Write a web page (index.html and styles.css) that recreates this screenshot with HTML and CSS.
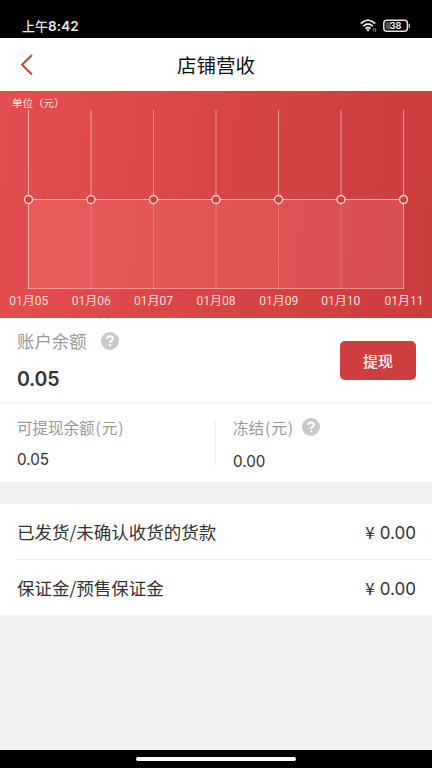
FILE: index.html
```html
<!DOCTYPE html>
<html lang="zh-CN">
<head>
<meta charset="utf-8">
<meta name="viewport" content="width=device-width, initial-scale=1">
<title>店铺营收</title>
<link rel="stylesheet" href="styles.css">
</head>
<body>
<div class="screen">
  <div class="status">
    <span class="time">上午<b>8:42</b></span>
    <svg class="status-icons" width="52" height="16" viewBox="0 0 52 16">
      <g fill="none" stroke="#e4e4e4" stroke-width="1.8">
        <path d="M.8 5.5Q8-1.2 15.2 5.500"/>
        <path d="M3.100 8.200Q8 3.700 12.900 8.200"/>
        <path d="M5.500 10.600Q8 8.300 10.500 10.600"/>
        <rect x="23.800" y="2.300" width="23.600" height="11" rx="3" stroke-width="1.500"/>
      </g>
      <path d="M6.300 11.600Q8 10.400 9.700 11.600L8 13.700Z" fill="#e4e4e4"/>
      <path d="M13.700 13.500v-3l-1 1M15.500 10.500v3l1-1" fill="none" stroke="#bbb" stroke-width=".7"/>
      <rect x="25.500" y="4" width="5.500" height="7.600" rx="1" fill="#555"/>
      <rect x="48.700" y="5.800" width="1.300" height="4" fill="#ccc"/>
      <text class="battery-text" x="35.600" y="11" text-anchor="middle">38</text>
    </svg>
  </div>
  <header class="header">
    <svg class="back" width="14" height="22" viewBox="0 0 14 22"><path d="M12 1L2 10.700L12 20.500" fill="none" stroke="#cf4141" stroke-width="2"/></svg>
    <h1>店铺营收</h1>
  </header>
  <section class="chart">
    <svg width="432" height="227" viewBox="0 91 432 227">
      <text class="unit" x="12" y="107">单位（元）</text>
      <rect x="28.500" y="199.500" width="375" height="89" fill="#ff8a88" fill-opacity=".24"/>
      <path d="M28.500 110V289M403.500 110V289" class="edge"/>
      <path d="M91 110V199M153.500 110V199M216 110V199M278.500 110V199M341 110V199" class="grid"/>
      <path d="M91 200V289M153.500 200V289M216 200V289M278.500 200V289M341 200V289" class="grid-low"/>
      <path d="M28 288.500H404" class="base"/>
      <path d="M28.500 199.500H403.500" class="line"/>
      <g class="points">
        <circle cx="28.500" cy="199.500" r="4"/><circle cx="91" cy="199.500" r="4"/><circle cx="153.500" cy="199.500" r="4"/><circle cx="216" cy="199.500" r="4"/><circle cx="278.500" cy="199.500" r="4"/><circle cx="341" cy="199.500" r="4"/><circle cx="403.500" cy="199.500" r="4"/>
      </g>
      <g class="dates">
        <text x="28.700" y="304.500">01月05</text><text x="91.200" y="304.500">01月06</text><text x="153.600" y="304.500">01月07</text><text x="216" y="304.500">01月08</text><text x="278.700" y="304.500">01月09</text><text x="340.800" y="304.500">01月10</text><text x="404" y="304.500">01月11</text>
      </g>
    </svg>
  </section>
  <section class="balance">
    <div>
      <div class="label">账户余额
        <svg class="help" width="18" height="18" viewBox="0 0 18 18"><circle cx="9" cy="9" r="9"/><path d="M6.200 7Q6.200 4.300 9 4.300T11.800 6.800C11.800 8.700 9 8.500 9 10.900"/><path d="M9 12.300v2"/></svg>
      </div>
      <div class="total">0.05</div>
    </div>
    <button class="withdraw">提现</button>
  </section>
  <section class="split">
    <div class="cell">
      <div class="sub-label">可提现余额<i>(</i>元<i>)</i></div>
      <div class="amount">0.05</div>
    </div>
    <div class="cell cell-right">
      <div class="sub-label">冻结<i>(</i>元<i>)</i>
        <svg class="help" width="18" height="18" viewBox="0 0 18 18"><circle cx="9" cy="9" r="9"/><path d="M6.200 7Q6.200 4.300 9 4.300T11.800 6.800C11.800 8.700 9 8.500 9 10.900"/><path d="M9 12.300v2"/></svg>
      </div>
      <div class="amount">0.00</div>
    </div>
  </section>
  <section class="list">
    <div class="row"><span>已发货/未确认收货的货款</span><span class="money"><span class="yen">¥</span>0.00</span></div>
    <div class="row"><span>保证金/预售保证金</span><span class="money"><span class="yen">¥</span>0.00</span></div>
  </section>
  <div class="navbar"><div class="pill"></div></div>
</div>
</body>
</html>
```
FILE: styles.css
```css
* { box-sizing: border-box; }
body { margin: 0; background: #f2f2f2; font-family: "Noto Sans CJK SC", sans-serif; color: #333; }
svg { display: block; flex: none; }
.screen { width: 432px; height: 768px; display: flex; flex-direction: column; overflow: hidden; white-space: nowrap; }
.status { height: 38px; flex: none; background: #000; color: #e8e8e8; display: flex; justify-content: space-between; padding: 14px 20px 0 22px; }
.time { font-size: 13px; font-weight: 500; line-height: 24px; }
.time b { font-family: Inter, sans-serif; font-size: 13.5px; font-weight: 600; letter-spacing: .1px; }
.status-icons { margin-top: 4px; }
.battery-text { font: 700 9px Inter, sans-serif; fill: #eee; }
.header { height: 53px; flex: none; background: #fff; display: flex; align-items: center; padding: 0 34px 0 20px; }
.header h1 { flex: 1; margin: 0; text-align: center; font-size: 19.500px; font-weight: 400; color: #111; }
.chart { height: 227px; flex: none; background: linear-gradient(95deg, #e54e4f 0%, #d94545 50%, #cb3c3c 100%); }
.unit { font-size: 10.500px; fill: #ffe4e2; }
.edge { stroke: #fff; stroke-opacity: .55; fill: none; }
.grid { stroke: #fff; stroke-opacity: .45; fill: none; }
.grid-low { stroke: #fff; stroke-opacity: .22; fill: none; }
.base { stroke: #fff; stroke-opacity: .38; }
.line { stroke: #f8c8c5; stroke-width: 1.2; }
.points { fill: #ce4040; stroke: #fbdedc; stroke-width: 1.300; }
.dates { font: 12px Roboto, "Noto Sans CJK SC", sans-serif; fill: #ffdedd; text-anchor: middle; }
.balance { height: 86px; flex: none; background: #fff; border-bottom: 2px solid #f6f6f6; display: flex; justify-content: space-between; padding: 10px 16px 0 17px; }
.label { height: 25px; display: flex; align-items: center; gap: 14px; font-size: 17.400px; color: #999; }
.help { fill: #c8c9cc; }
.help path { fill: none; stroke: #fff; stroke-width: 2; }
.total { margin-top: 11px; line-height: 30px; font-family: Inter, sans-serif; font-size: 19.500px; font-weight: 600; letter-spacing: -.2px; }
.withdraw { width: 76px; height: 39px; margin-top: 13px; padding: 0; border: 0; border-radius: 5px; background: #cf3e3f; color: #fff; font: 500 15px/38px "Noto Sans CJK SC", sans-serif; }
.split { height: 78px; flex: none; background: #fff; display: flex; }
.cell { width: 216px; padding: 10px 0 0 17px; }
.cell-right { position: relative; }
.cell-right::before { content: ""; position: absolute; left: -1px; top: 16px; width: 1px; height: 46px; background: #eee; }
.sub-label { height: 25px; display: flex; align-items: center; font-size: 15.500px; color: #999; }
.sub-label i { font-style: normal; padding: 0 1px; }
.sub-label .help { margin-left: 8px; }
.amount { margin-top: 9px; line-height: 24px; font-family: Inter, sans-serif; font-size: 15.200px; }
.cell-right .amount { margin-top: 11px; }
.list { margin-top: 22px; background: #fff; flex: none; }
.row { height: 55px; margin-left: 17px; padding-right: 16px; display: flex; align-items: center; justify-content: space-between; font-size: 17.500px; }
.row + .row { height: 56px; border-top: 1px solid #ededed; }
.money { font-family: Inter, sans-serif; font-size: 17px; }
.yen { margin-right: 5px; font-family: "Noto Sans CJK SC", sans-serif; }
.navbar { margin-top: auto; height: 18px; flex: none; background: #000; display: flex; justify-content: center; align-items: center; }
.pill { width: 160px; height: 4px; border-radius: 2px; background: #fff; }
```
